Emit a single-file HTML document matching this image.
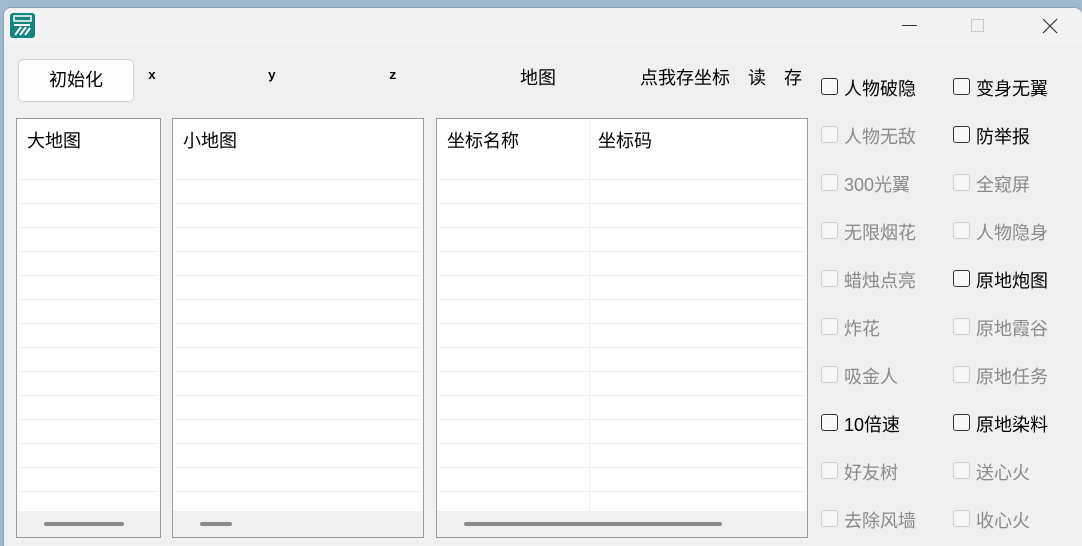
<!DOCTYPE html>
<html><head><meta charset="utf-8"><style>
*{margin:0;padding:0;box-sizing:border-box}
body{width:1082px;height:546px;overflow:hidden;background:#9fb9cf;font-family:"Liberation Sans","Noto Sans CJK SC",sans-serif;position:relative}
.win{position:absolute;left:3px;top:7px;width:1079px;height:539px;background:#f0f0f0;border-radius:8px 8px 0 0;border:1px solid #8aa0b4;border-right:none;border-bottom:none}
.title{position:absolute;left:0;top:0;width:100%;height:38px;background:#f3f3f3;border-radius:8px 8px 0 0}
.a{position:absolute;white-space:nowrap}
.lbl{font-size:18px;color:#000}
.btn{position:absolute;left:18px;top:59px;width:116px;height:43px;background:#fdfdfd;border:1px solid #d0d0d0;border-radius:5px;font-size:18px;text-align:center;line-height:41px}
.box{position:absolute;background:#fff;border:1px solid #9a9aa0;overflow:hidden}
.row{position:absolute;left:2px;right:2px;height:1px;background:#f0f0f0}
.sb{position:absolute;left:0;right:0;bottom:0;height:26px;background:#f0f0f0}
.th{position:absolute;top:11px;height:4px;background:#8a8a8a;border-radius:2px}
.cb{position:absolute;width:17px;height:17px;border:1.5px solid #333;border-radius:3px;background:#f8f8f8}
.cb.d{border-color:#cfcfcf;background:#f6f6f6}
.ct{position:absolute;font-size:18px;color:#000;white-space:nowrap}
.ct.d{color:#8a8a8a}
</style></head><body>
<div class="win">
<div class="title"></div>
<svg class="a" style="left:6px;top:5px" width="25" height="25" viewBox="0 0 25 25"><rect width="25" height="25" rx="3" fill="#12857f"/><rect x="4" y="3" width="17" height="5" fill="none" stroke="#fff" stroke-width="1.5"/><path d="M4 12h16M5 22l6-8M10 22l6-8M15 22l5-7" stroke="#fff" stroke-width="2" fill="none"/></svg>
<div class="a" style="left:898px;top:17px;width:15px;height:1px;background:#333"></div>
<div class="a" style="left:967px;top:11px;width:13px;height:13px;border:1px solid #ccc"></div>
<svg class="a" style="left:1038px;top:10px" width="16" height="16"><path d="M1 1L15 15M15 1L1 15" stroke="#333" stroke-width="1.2"/></svg>
</div>
<div class="btn">初始化</div>
<div class="a" style="left:148px;top:68px;font-size:13px;font-family:'Liberation Mono',monospace;font-weight:bold">x</div>
<div class="a" style="left:268px;top:68px;font-size:13px;font-family:'Liberation Mono',monospace;font-weight:bold">y</div>
<div class="a" style="left:389px;top:68px;font-size:13px;font-family:'Liberation Mono',monospace;font-weight:bold">z</div>
<div class="a lbl" style="left:520px;top:64px">地图</div>
<div class="a lbl" style="left:640px;top:64px">点我存坐标</div>
<div class="a lbl" style="left:748px;top:64px">读</div>
<div class="a lbl" style="left:784px;top:64px">存</div>

<div class="box" style="left:16px;top:118px;width:145px;height:420px" id="b1"><div class="a lbl" style="left:10px;top:8px">大地图</div><div class="sb"><div class="th" style="left:27px;width:80px"></div></div></div>
<div class="box" style="left:172px;top:118px;width:252px;height:420px" id="b2"><div class="a lbl" style="left:10px;top:8px">小地图</div><div class="sb"><div class="th" style="left:27px;width:32px"></div></div></div>
<div class="box" style="left:436px;top:118px;width:372px;height:420px" id="b3"><div class="a lbl" style="left:10px;top:8px">坐标名称</div><div class="a" style="left:152px;top:2px;width:1px;height:390px;background:#f0f0f0"></div><div class="a lbl" style="left:161px;top:8px">坐标码</div><div class="sb"><div class="th" style="left:27px;width:258px"></div></div></div>

<script>
['b1','b2','b3'].forEach(function(id){var b=document.getElementById(id);for(var y=60;y<390;y+=24){var d=document.createElement('div');d.className='row';d.style.top=y+'px';b.insertBefore(d,b.firstChild);}});
var items=[["人物破隐",0,"变身无翼",0],["人物无敌",1,"防举报",0],["300光翼",1,"全窥屏",1],["无限烟花",1,"人物隐身",1],["蜡烛点亮",1,"原地炮图",0],["炸花",1,"原地霞谷",1],["吸金人",1,"原地任务",1],["10倍速",0,"原地染料",0],["好友树",1,"送心火",1],["去除风墙",1,"收心火",1]];
var h='';items.forEach(function(it,i){var y=78+i*48;[[821,it[0],it[1]],[953,it[2],it[3]]].forEach(function(c){h+='<div class="cb'+(c[2]?' d':'')+'" style="left:'+c[0]+'px;top:'+y+'px"></div><div class="ct'+(c[2]?' d':'')+'" style="left:'+(c[0]+23)+'px;top:'+(y-3)+'px">'+c[1]+'</div>';});});
document.body.insertAdjacentHTML('beforeend',h);
</script>
</body></html>
